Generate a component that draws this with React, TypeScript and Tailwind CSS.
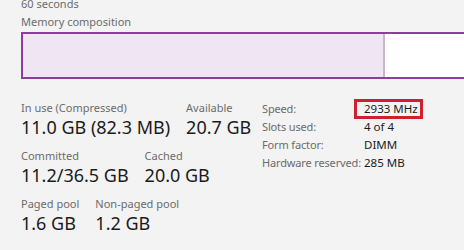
import React from "react";

const stats = [
  [
    { label: "In use (Compressed)", value: "11.0 GB (82.3 MB)" },
    { label: "Available", value: "20.7 GB" },
  ],
  [
    { label: "Committed", value: "11.2/36.5 GB" },
    { label: "Cached", value: "20.0 GB" },
  ],
  [
    { label: "Paged pool", value: "1.6 GB" },
    { label: "Non-paged pool", value: "1.2 GB" },
  ],
];

const details = [
  { label: "Speed:", value: "2933 MHz", marked: true },
  { label: "Slots used:", value: "4 of 4" },
  { label: "Form factor:", value: "DIMM" },
  { label: "Hardware reserved:", value: "285 MB" },
];

export default function App() {
  return (
    <div
      className="w-[464px] h-[250px] overflow-hidden bg-[#f3f3f3] pl-[21px]"
      style={{ fontFamily: '"Noto Sans", "Open Sans", sans-serif' }}
    >
      <div className="-mt-[4px] text-[11px] leading-[15px] text-[#6b6b6b]">60 seconds</div>
      <div className="mt-[3px] text-[11px] leading-[15px] text-[#6b6b6b]">Memory composition</div>

      <div className="mt-[3px] flex h-[47px] w-[470px] border-2 border-[#8b3f9b] bg-white">
        <div className="w-[362px] border-r-2 border-[#c9b6cd] bg-[#f0e5f2]" />
      </div>

      <div className="mt-[21px] flex">
        <div className="flex w-[241px] shrink-0 flex-col gap-[9px]">
          {stats.map((row, i) => (
            <div key={i} className="flex gap-[16px]">
              {row.map((s) => (
                <div key={s.label} className="flex flex-col whitespace-nowrap">
                  <span className="text-[11px] leading-[15px] text-[#6b6b6b]">{s.label}</span>
                  <span className="text-[18px] leading-[24px] text-[#1b1b1b]">{s.value}</span>
                </div>
              ))}
            </div>
          ))}
        </div>

        <div className="grid grid-cols-[102px_auto] auto-rows-[18px] whitespace-nowrap text-[11.5px] leading-[18px]">
          {details.map((d) => (
            <React.Fragment key={d.label}>
              <span className="text-[11px] tracking-[-0.15px] text-[#6b6b6b]">{d.label}</span>
              <span className="relative text-[#1b1b1b]">
                {d.value}
                {d.marked && (
                  <span className="absolute -left-[10px] -top-[1px] h-[20px] w-[69px] border-[3px] border-[#d0202f]" />
                )}
              </span>
            </React.Fragment>
          ))}
        </div>
      </div>
    </div>
  );
}
